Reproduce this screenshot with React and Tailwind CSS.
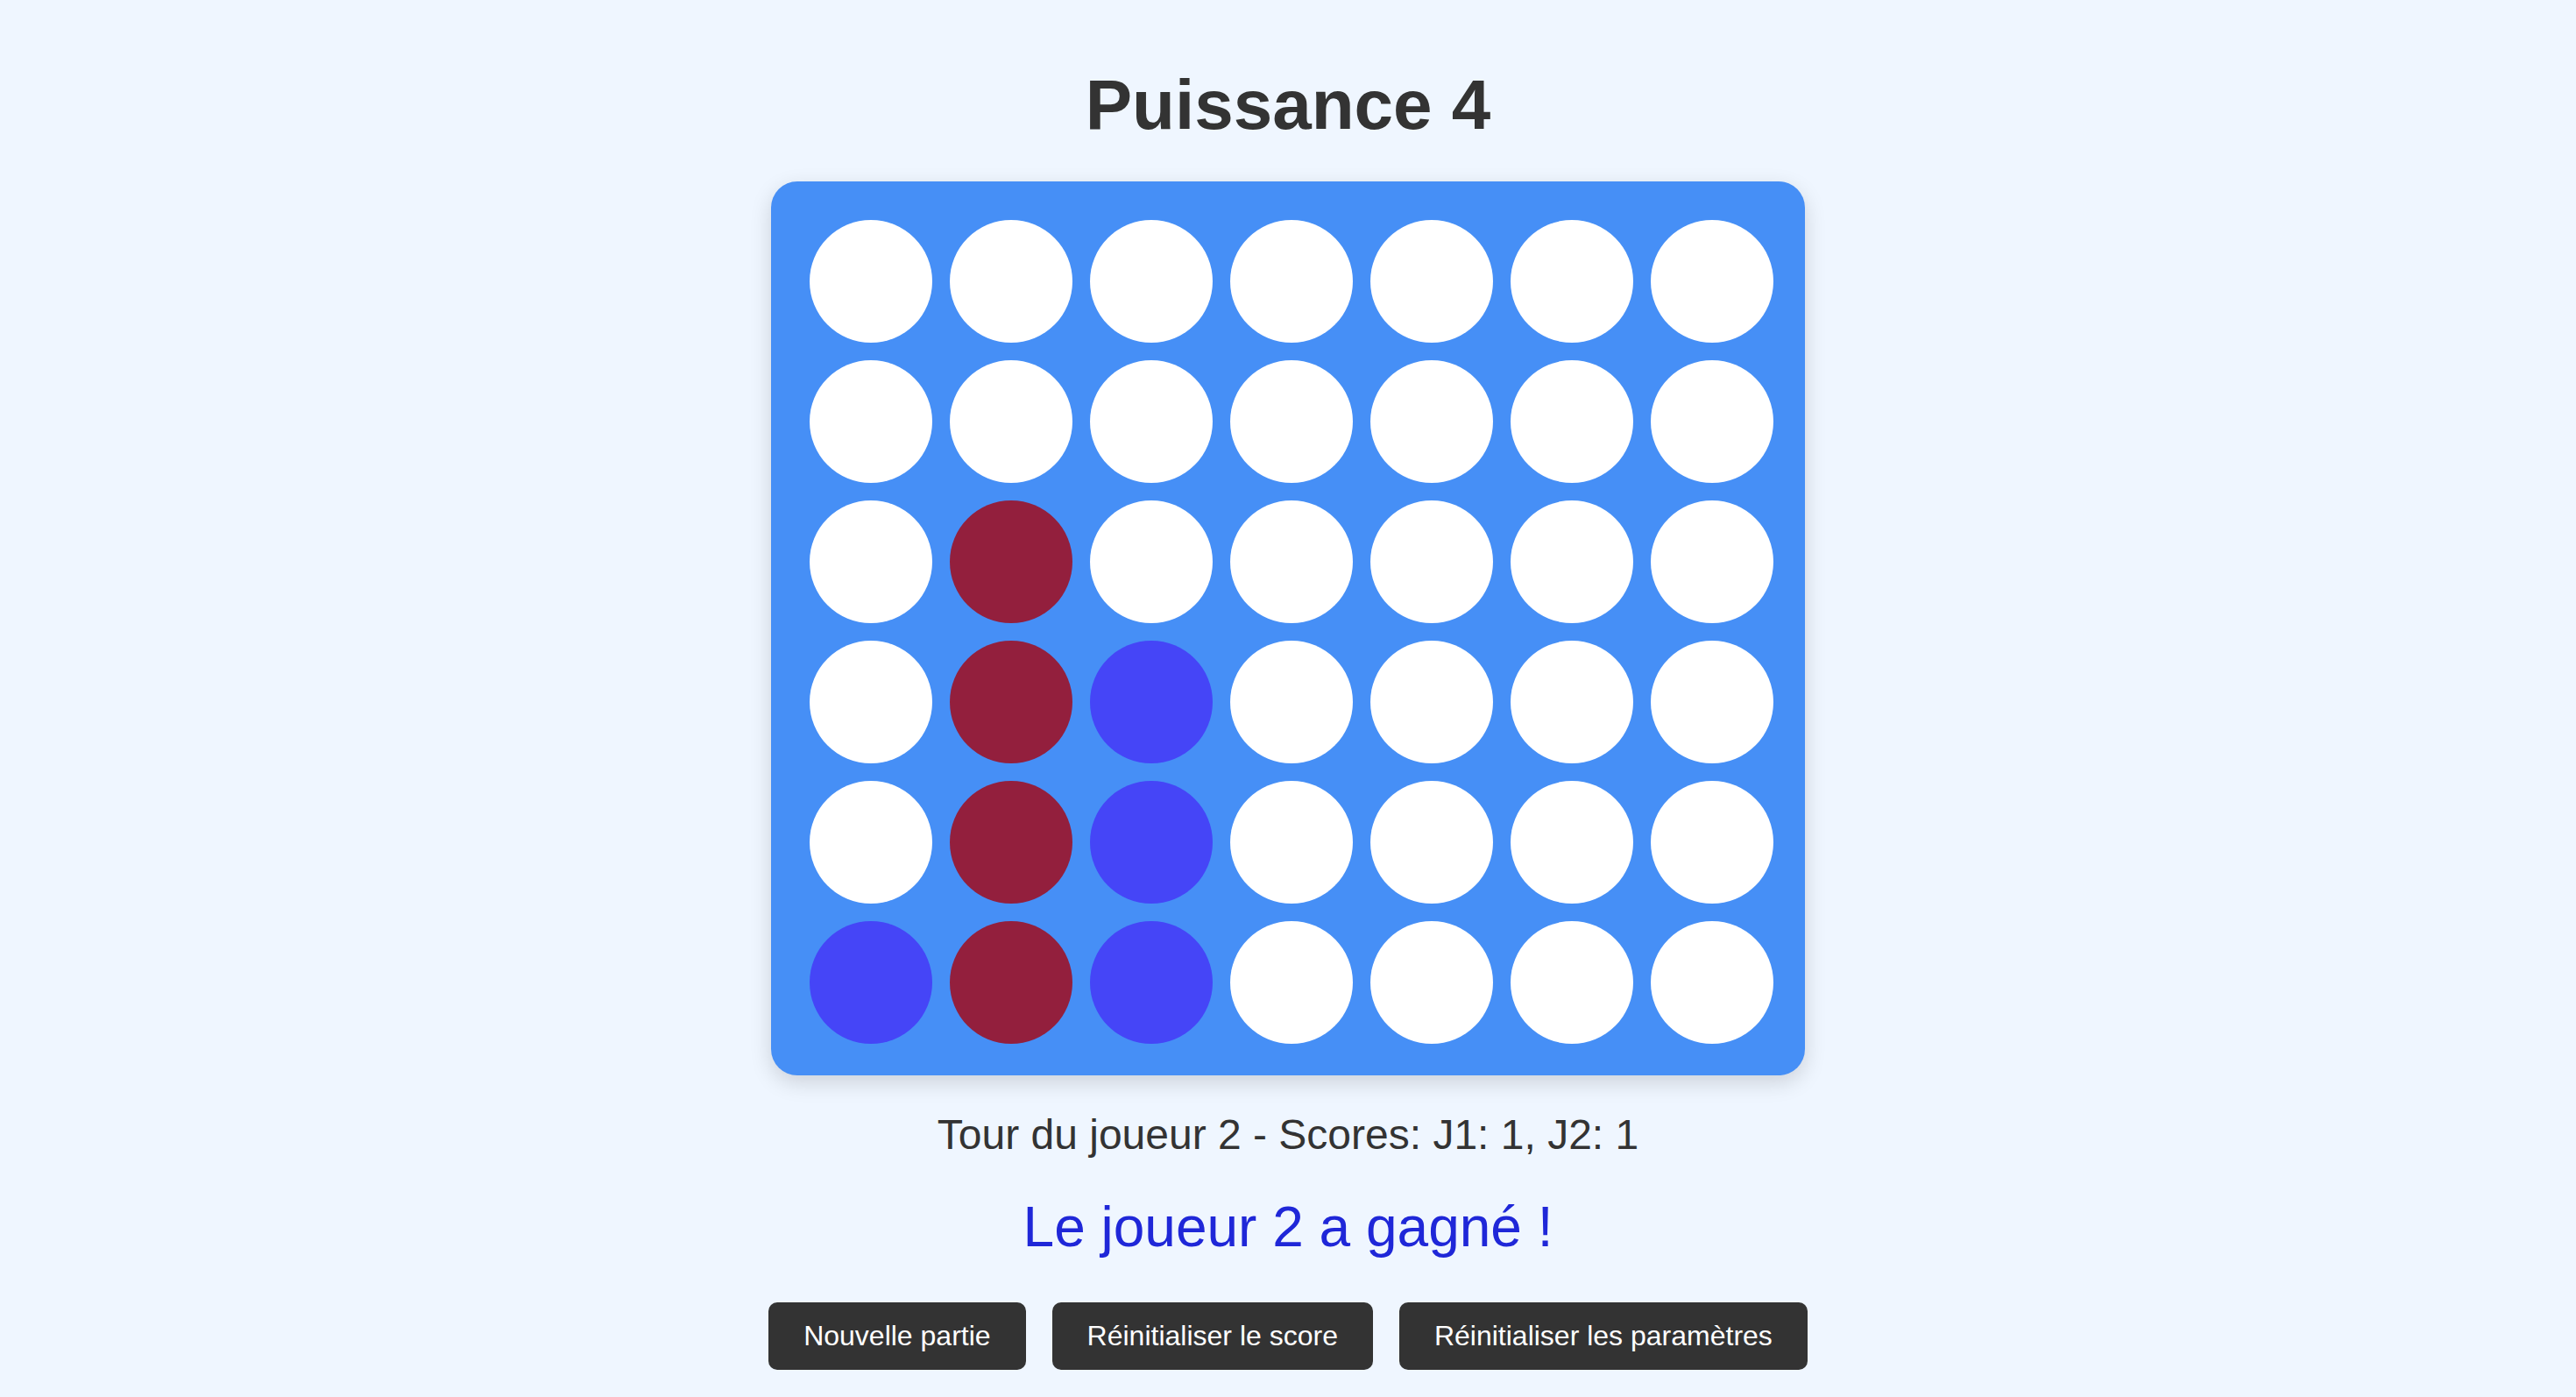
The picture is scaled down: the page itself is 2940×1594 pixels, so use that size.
import React from "react";

const board = [
  [0, 0, 0, 0, 0, 0, 0],
  [0, 0, 0, 0, 0, 0, 0],
  [0, 1, 0, 0, 0, 0, 0],
  [0, 1, 2, 0, 0, 0, 0],
  [0, 1, 2, 0, 0, 0, 0],
  [2, 1, 2, 0, 0, 0, 0],
];

function Cell({ v }) {
  if (v === 1) return <div className="w-[140px] h-[140px] rounded-full bg-[#931f3d]" />;
  if (v === 2) return <div className="w-[140px] h-[140px] rounded-full bg-[#4545f7]" />;
  return <div className="w-[140px] h-[140px] rounded-full bg-white" />;
}

export default function App() {
  return (
    <div
      className="min-h-[1594px] w-full bg-[#eff6ff] flex flex-col items-center pt-[74px]"
      style={{ fontFamily: '"Liberation Sans", Arial, sans-serif' }}
    >
      <h1 className="text-[80px] leading-[92px] font-bold text-[#333333]">Puissance 4</h1>
      <div className="mt-[41px] bg-[#468ff6] rounded-[30px] pl-[44px] pt-[44px] pr-[36px] pb-[36px] grid grid-cols-7 gap-[20px] shadow-[0_8px_24px_rgba(0,0,0,0.15)]">
        {board.flatMap((row, r) => row.map((v, c) => <Cell key={r + "-" + c} v={v} />))}
      </div>
      <p className="mt-[40px] text-[48px] leading-[56px] text-[#333333]">
        Tour du joueur 2 - Scores: J1: 1, J2: 1
      </p>
      <p className="mt-[40px] text-[64px] leading-[74px] text-[#1f27d8]">Le joueur 2 a gagné !</p>
      <div className="mt-[49px] flex gap-[30px]">
        <button className="bg-[#333333] text-white text-[32px] leading-[37px] py-[20px] px-[40px] rounded-[10px]">
          Nouvelle partie
        </button>
        <button className="bg-[#333333] text-white text-[32px] leading-[37px] py-[20px] px-[40px] rounded-[10px]">
          Réinitialiser le score
        </button>
        <button className="bg-[#333333] text-white text-[32px] leading-[37px] py-[20px] px-[40px] rounded-[10px]">
          Réinitialiser les paramètres
        </button>
      </div>
    </div>
  );
}
